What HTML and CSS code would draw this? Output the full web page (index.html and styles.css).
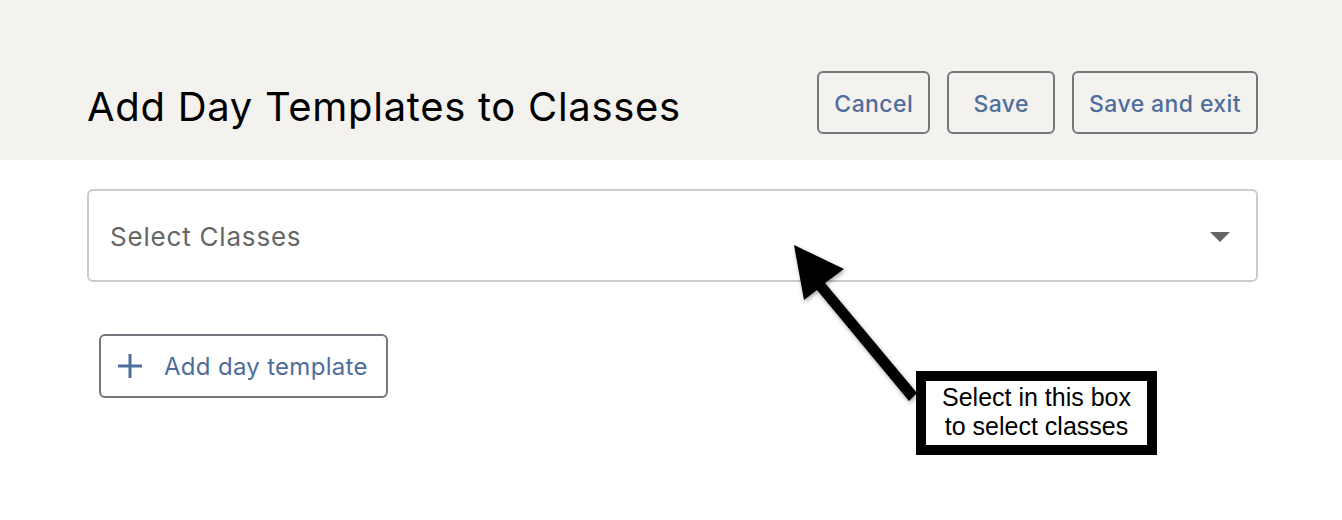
FILE: index.html
```html
<!DOCTYPE html>
<html lang="en">
<head>
    <meta charset="UTF-8">
    <meta name="viewport" content="width=device-width, initial-scale=1.0">
    <title>Add Day Templates to Classes</title>
    <link rel="stylesheet" href="styles.css">
</head>
<body>

    <header class="page-header">
        <h1>Add Day Templates to Classes</h1>
        <div class="actions">
            <button class="btn">Cancel</button>
            <button class="btn">Save</button>
            <button class="btn">Save and exit</button>
        </div>
    </header>

    <main class="content">
        <div class="select-box">
            <span class="placeholder">Select Classes</span>
            <span class="caret"></span>
        </div>

        <button class="btn add-btn">
            <svg class="plus" width="24" height="24" viewBox="0 0 24 24">
                <path d="M12 0v24M0 12h24" stroke="#4f6d9a" stroke-width="3" fill="none"/>
            </svg>
            Add day template
        </button>
    </main>

    <!-- annotation over the page -->
    <svg class="arrow" width="1342" height="520" viewBox="0 0 1342 520">
        <polygon points="794,245 844,269 825,283 917,393 909,401 817,290 804,300" fill="#000"/>
    </svg>
    <div class="note">Select in this box<br>to select classes</div>

</body>
</html>
```

FILE: styles.css
```css
* {
    margin: 0;
    padding: 0;
    box-sizing: border-box;
}

body {
    font-family: Inter, "Open Sans", sans-serif;
    background: #fff;
    color: #111;
    width: 1342px;
    height: 520px;
    overflow: hidden;
}

.page-header {
    height: 160px;
    background: #f3f2ef;
    display: flex;
    justify-content: space-between;
    align-items: flex-start;
    padding: 71px 84px 0 87px;
}

h1 {
    font-weight: 400;
    font-size: 40px;
    line-height: 72px;
    color: #000;
    letter-spacing: 0.7px;
}

.actions {
    display: flex;
    gap: 17px;
}

.btn {
    height: 63px;
    min-width: 108px;
    padding: 3px 15px 0;
    background: transparent;
    border: 2px solid #77767f;
    border-radius: 6px;
    color: #4f6d9a;
    font-family: Inter, "Open Sans", sans-serif;
    font-size: 23px;
    font-weight: 500;
    letter-spacing: 0.4px;
    cursor: pointer;
}

.content {
    padding: 29px 84px 0 87px;
}

.select-box {
    height: 93px;
    border: 2px solid #cbcbcb;
    border-radius: 6px;
    display: flex;
    align-items: center;
    justify-content: space-between;
    padding: 2px 26px 0 21px;
}

.placeholder {
    font-size: 26px;
    color: #666;
    letter-spacing: 0.8px;
}

.caret {
    width: 0;
    height: 0;
    border-left: 10px solid transparent;
    border-right: 10px solid transparent;
    border-top: 10px solid #666;
}

.add-btn {
    margin: 52px 0 0 12px;
    height: 64px;
    width: 289px;
    display: flex;
    align-items: center;
    gap: 22px;
    padding: 0 17px;
    font-weight: 400;
    font-size: 24px;
    letter-spacing: 0.3px;
}

.arrow {
    position: absolute;
    top: 0;
    left: 0;
    pointer-events: none;
    filter: drop-shadow(1px 2px 2px rgba(0, 0, 0, 0.35));
}

.note {
    position: absolute;
    left: 916px;
    top: 371px;
    width: 241px;
    height: 84px;
    border: 10px solid #000;
    background: #fff;
    font-family: "Liberation Sans", Arial, sans-serif;
    font-size: 25px;
    line-height: 29px;
    text-align: center;
    padding-top: 2px;
    color: #000;
}
```
